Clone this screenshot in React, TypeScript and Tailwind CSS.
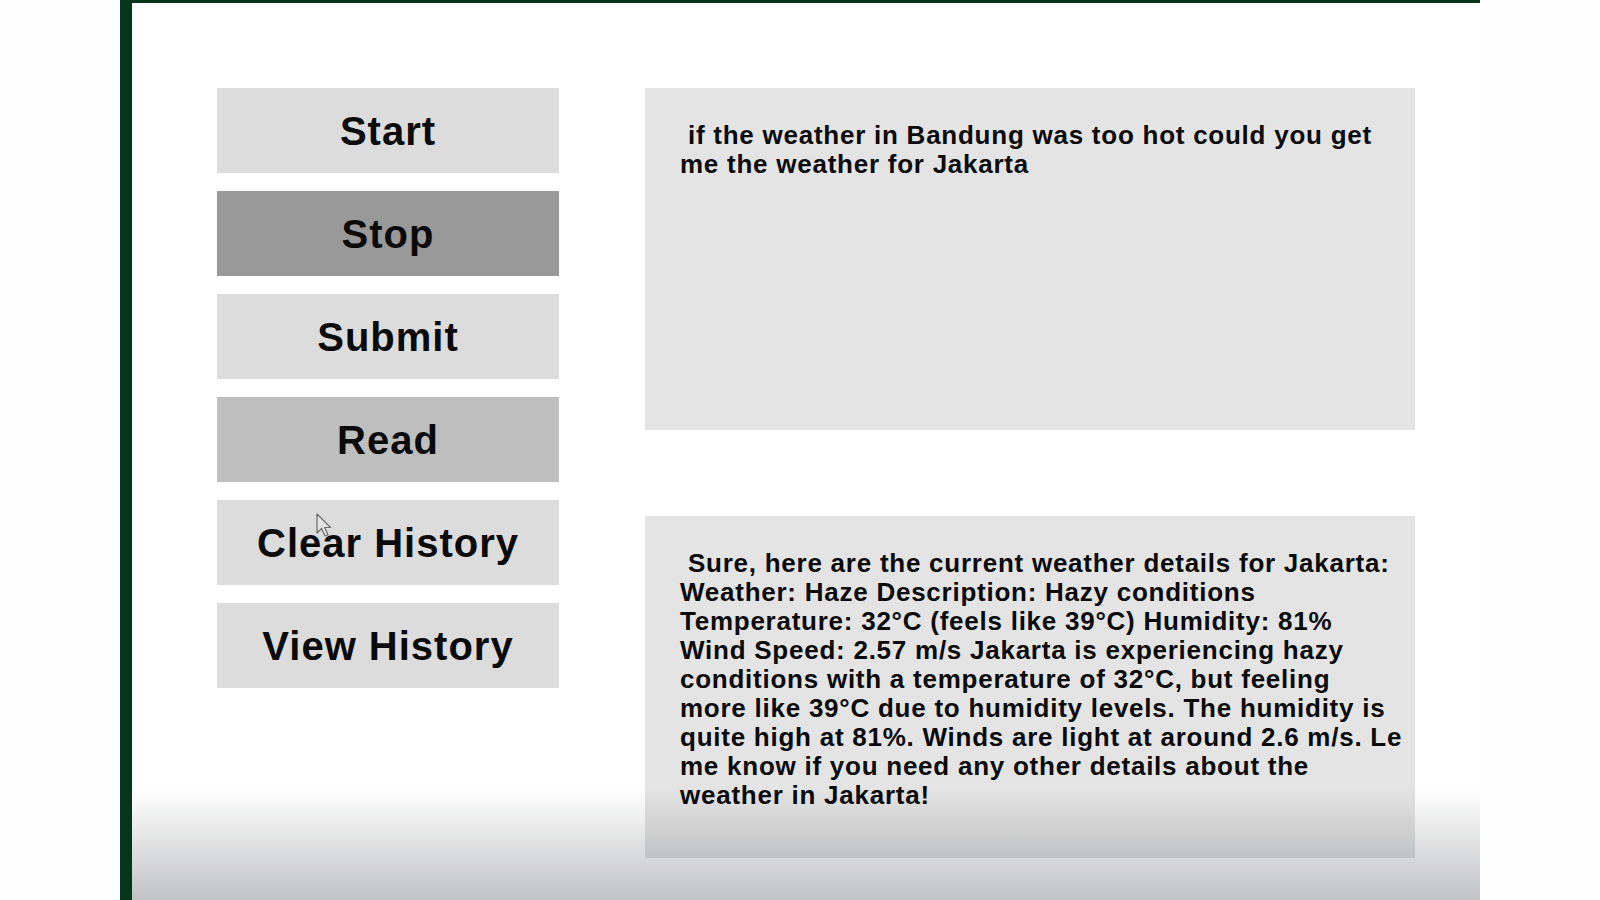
import React from "react";

const buttons: { label: string; cls: string }[] = [
  { label: "Start", cls: "bg-[#dcdcdc]" },
  { label: "Stop", cls: "bg-[#999999]" },
  { label: "Submit", cls: "bg-[#dcdcdc]" },
  { label: "Read", cls: "bg-[#bebebe]" },
  { label: "Clear History", cls: "bg-[#dcdcdc]" },
  { label: "View History", cls: "bg-[#dcdcdc]" },
];

const questionLines = [
  " if the weather in Bandung was too hot could you get",
  "me the weather for Jakarta",
];

const answerLines = [
  " Sure, here are the current weather details for Jakarta:",
  "Weather: Haze Description: Hazy conditions",
  "Temperature: 32°C (feels like 39°C) Humidity: 81%",
  "Wind Speed: 2.57 m/s Jakarta is experiencing hazy",
  "conditions with a temperature of 32°C, but feeling",
  "more like 39°C due to humidity levels. The humidity is",
  "quite high at 81%. Winds are light at around 2.6 m/s. Le",
  "me know if you need any other details about the",
  "weather in Jakarta!",
];

function Lines({ lines, tracking }: { lines: string[]; tracking: string }) {
  return (
    <div className={`text-[26px] leading-[29px] font-bold ${tracking} text-[#0a0a0a]`}>
      {lines.map((l, i) => (
        <div key={i} className="whitespace-pre">
          {l}
        </div>
      ))}
    </div>
  );
}

export default function App() {
  return (
    <div className="w-[1600px] h-[900px] bg-[#fefefe] flex font-['Liberation_Sans',Arial,sans-serif] overflow-hidden">
      <div className="w-[120px] shrink-0" />
      <div className="relative w-[1360px] h-full shrink-0 border-l-[12px] border-t-[3px] border-[#06361a] bg-white flex pl-[85px] pt-[85px] gap-[86px]">
        <div className="flex flex-col gap-[18px] w-[342px] shrink-0">
          {buttons.map((b) => (
            <div
              key={b.label}
              className={`${b.cls} h-[85px] flex items-center justify-center text-[40px] font-bold tracking-[1px] text-[#0a0a0a]`}
            >
              {b.label}
            </div>
          ))}
        </div>
        <div className="flex flex-col gap-[86px] w-[770px] shrink-0">
          <div className="h-[342px] bg-[#e4e4e4] pl-[35px] pt-[33px]">
            <Lines lines={questionLines} tracking="tracking-[0.75px]" />
          </div>
          <div className="h-[342px] bg-[#e4e4e4] pl-[35px] pt-[33px]">
            <Lines lines={answerLines} tracking="tracking-[0.75px]" />
          </div>
        </div>
        <div className="pointer-events-none absolute left-0 right-0 bottom-0 h-[112px] bg-linear-to-b from-[rgba(12,15,23,0)] to-[rgba(12,15,23,0.25)]" />
        <svg
          className="absolute left-[184px] top-[510px]"
          width="18"
          height="26"
          viewBox="0 0 18 26"
        >
          <path
            d="M1 1 L1 20 L5.5 15.5 L9 23 L12 21.7 L8.6 14.5 L14.5 14.5 Z"
            fill="rgba(235,235,235,0.6)"
            stroke="#6b6b6b"
            strokeWidth="1.2"
            strokeLinejoin="round"
          />
        </svg>
      </div>
    </div>
  );
}
